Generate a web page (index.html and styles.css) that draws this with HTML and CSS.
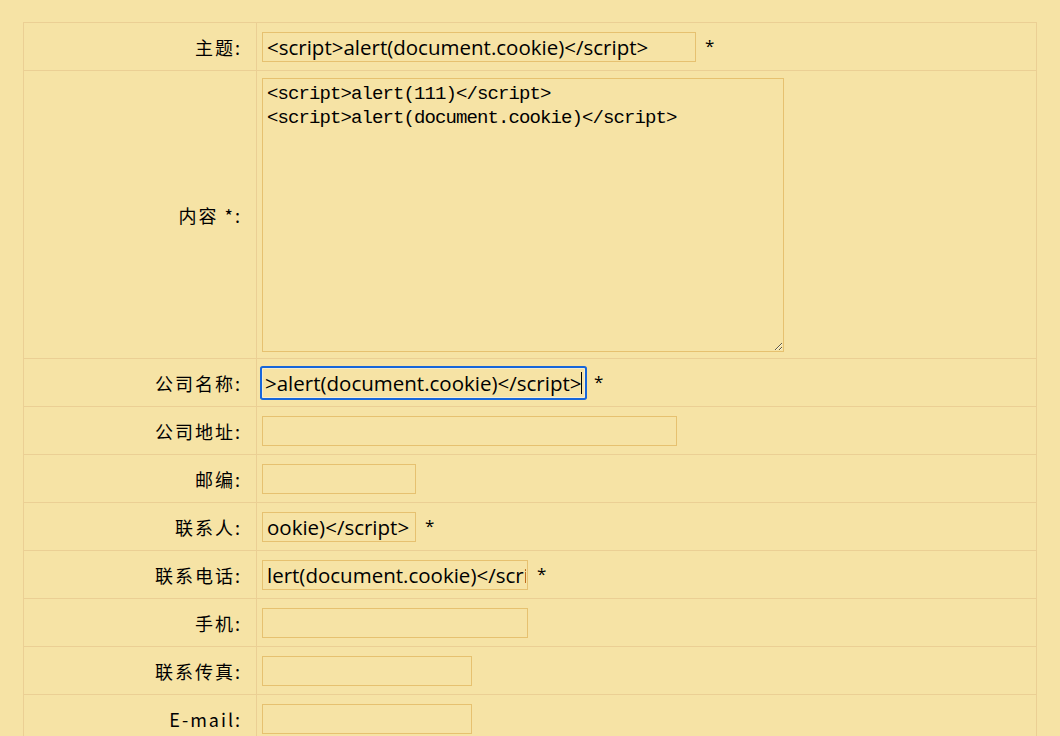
FILE: index.html
```html
<!DOCTYPE html>
<html lang="zh-CN">
<head>
<meta charset="utf-8">
<title>表单</title>
<link rel="stylesheet" href="styles.css">
</head>
<body>
<div class="form">
  <div class="label">主题:</div>
  <div class="value"><input class="field w434" type="text" value="<script>alert(document.cookie)</script>"><span class="req">*</span></div>

  <div class="label">内容 *:</div>
  <div class="value"><textarea class="area"><script>alert(111)</script>
<script>alert(document.cookie)</script></textarea></div>

  <div class="label">公司名称:</div>
  <div class="value"><span class="focus-wrap"><input class="field w323 focused" type="text" value=">alert(document.cookie)</script>"><span class="caret"></span></span><span class="req">*</span></div>

  <div class="label">公司地址:</div>
  <div class="value"><input class="field w415" type="text" value=""></div>

  <div class="label">邮编:</div>
  <div class="value"><input class="field w154" type="text" value=""></div>

  <div class="label">联系人:</div>
  <div class="value"><input class="field w154" type="text" value="ookie)</script>"><span class="req">*</span></div>

  <div class="label">联系电话:</div>
  <div class="value"><input class="field w266" type="text" value="lert(document.cookie)</scri"><span class="req">*</span></div>

  <div class="label">手机:</div>
  <div class="value"><input class="field w266" type="text" value=""></div>

  <div class="label">联系传真:</div>
  <div class="value"><input class="field w210" type="text" value=""></div>

  <div class="label">E-mail:</div>
  <div class="value"><input class="field w210" type="text" value=""></div>
</div>
</body>
</html>
```
FILE: styles.css
```css
html, body {
  margin: 0;
  padding: 0;
  background: #f6e3a5;
}
body {
  font-family: "Noto Sans CJK SC", "Open Sans", sans-serif;
  color: #000;
}
.form {
  box-sizing: border-box;
  width: 1014px;
  margin: 22px 0 0 23px;
  padding: 1px;
  display: grid;
  grid-template-columns: 232px 779px;
  grid-template-rows: 47px 287px;
  grid-auto-rows: 47px;
  gap: 1px;
  background: #ebcf94;
}
.label {
  background: #f6e3a5;
  display: flex;
  align-items: center;
  justify-content: flex-end;
  padding-right: 14px;
  font-size: 18px;
  letter-spacing: 2px;
  color: #000;
}
.value {
  background: #f6e3a5;
  display: flex;
  align-items: center;
  padding-left: 5px;
}
.field {
  box-sizing: border-box;
  height: 30px;
  margin: 0;
  padding: 0 1px 0 4px;
  border: 1px solid #e6c170;
  background: transparent;
  font-family: "Open Sans", sans-serif;
  font-size: 20.5px;
  color: #000;
  outline: none;
}
.w434 { width: 434px; }
.w323 { width: 323px; }
.w415 { width: 415px; }
.w154 { width: 154px; }
.w266 { width: 266px; }
.w210 { width: 210px; }
.focus-wrap {
  position: relative;
  display: inline-flex;
}
.focused {
  padding: 0 0 0 2px;
  border-color: #f4ecd0;
  box-shadow: 0 0 0 2px #1766da;
  border-radius: 1px;
}
.caret {
  position: absolute;
  left: 319px;
  top: 4px;
  width: 1px;
  height: 22px;
  background: #000;
}
.req {
  margin-left: 9px;
  font-family: "Open Sans", sans-serif;
  font-size: 17px;
  align-self: center;
  margin-bottom: 2px;
}
.area {
  box-sizing: border-box;
  width: 522px;
  height: 274px;
  margin: 0;
  padding: 3px 4px;
  border: 1px solid #e6c170;
  background: transparent;
  font-family: "Liberation Mono", monospace;
  font-size: 19px;
  letter-spacing: -0.9px;
  line-height: 24px;
  color: #000;
  resize: both;
  outline: none;
}
```
